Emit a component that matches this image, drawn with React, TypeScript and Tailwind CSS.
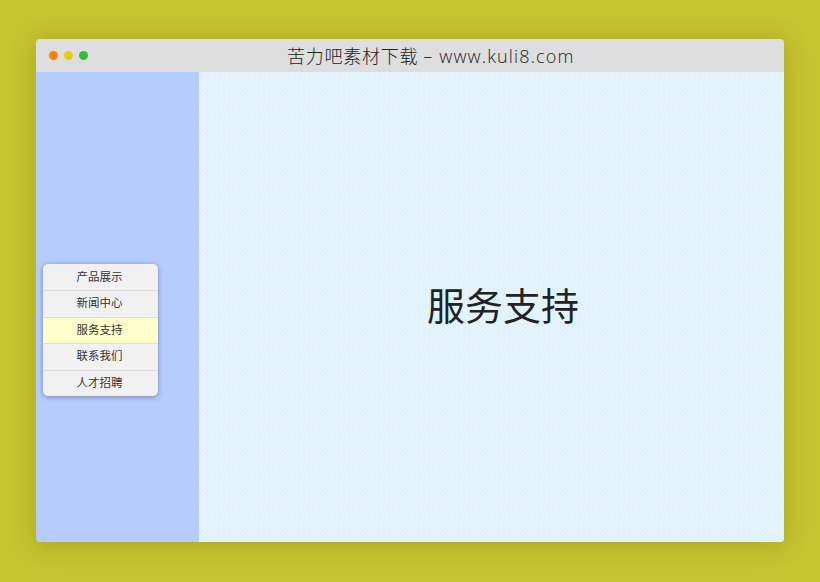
const menuItems = ["产品展示", "新闻中心", "服务支持", "联系我们", "人才招聘"];

export default function App() {
  return (
    <div className="h-[582px] w-[820px] overflow-hidden bg-[#c6c430] px-9 pt-[39px] font-['Liberation_Sans','Noto_Sans_CJK_SC',sans-serif]">
      <div className="flex h-[503px] flex-col overflow-hidden rounded-[4px] shadow-[0_2px_24px_rgba(90,90,0,0.3)]">
        {/* Title bar */}
        <div className="relative flex h-[33px] flex-none items-center bg-[#dedede] pl-[251px]">
          <div className="absolute left-[12.5px] top-[12px] flex gap-[6px]">
            <span className="h-[9px] w-[9px] rounded-full bg-[#ff7f00]" />
            <span className="h-[9px] w-[9px] rounded-full bg-[#f0c814]" />
            <span className="h-[9px] w-[9px] rounded-full bg-[#2fbd3a]" />
          </div>
          <h1 className="flex items-baseline text-[18px] leading-[33px] text-[#222222]">
            <span className="font-['Noto_Sans_CJK_SC',sans-serif] font-light tracking-[0.75px]">苦力吧素材下载</span>
            <span className="ml-[5px] font-['Open_Sans',sans-serif] font-light">–</span>
            <span className="ml-[7px] font-['Open_Sans',sans-serif] font-light tracking-[1.15px]">www.kuli8.com</span>
          </h1>
        </div>

        <div className="flex min-h-0 flex-1">
          {/* Sidebar */}
          <aside className="w-[163px] flex-none bg-[#b5ccfd] pl-[7px] pt-[192px]">
            <ul className="w-[115px] overflow-hidden rounded-[5px] bg-[#f1f1f1] shadow-[0_1px_5px_rgba(60,60,90,0.5)]">
              {menuItems.map((item, i) => (
                <li
                  key={item}
                  className={`flex h-[26.4px] items-center justify-center pr-[2px] text-[11.5px] text-[#333333] ${
                    i > 0 ? "border-t border-[#dcdcdc]" : ""
                  } ${i === 2 ? "bg-[#ffffcc]" : ""}`}
                >
                  {item}
                </li>
              ))}
            </ul>
          </aside>

          {/* Main */}
          <main className="flex flex-1 items-center justify-center bg-[#e2f3fc] bg-[conic-gradient(#e6f5fd_25%,#dff1fb_0_50%,#e6f5fd_0_75%,#dff1fb_0)] bg-[length:5px_5px] pl-[23px]">
            <span className="text-[38px] leading-none text-[#222222]">服务支持</span>
          </main>
        </div>
      </div>
    </div>
  );
}
